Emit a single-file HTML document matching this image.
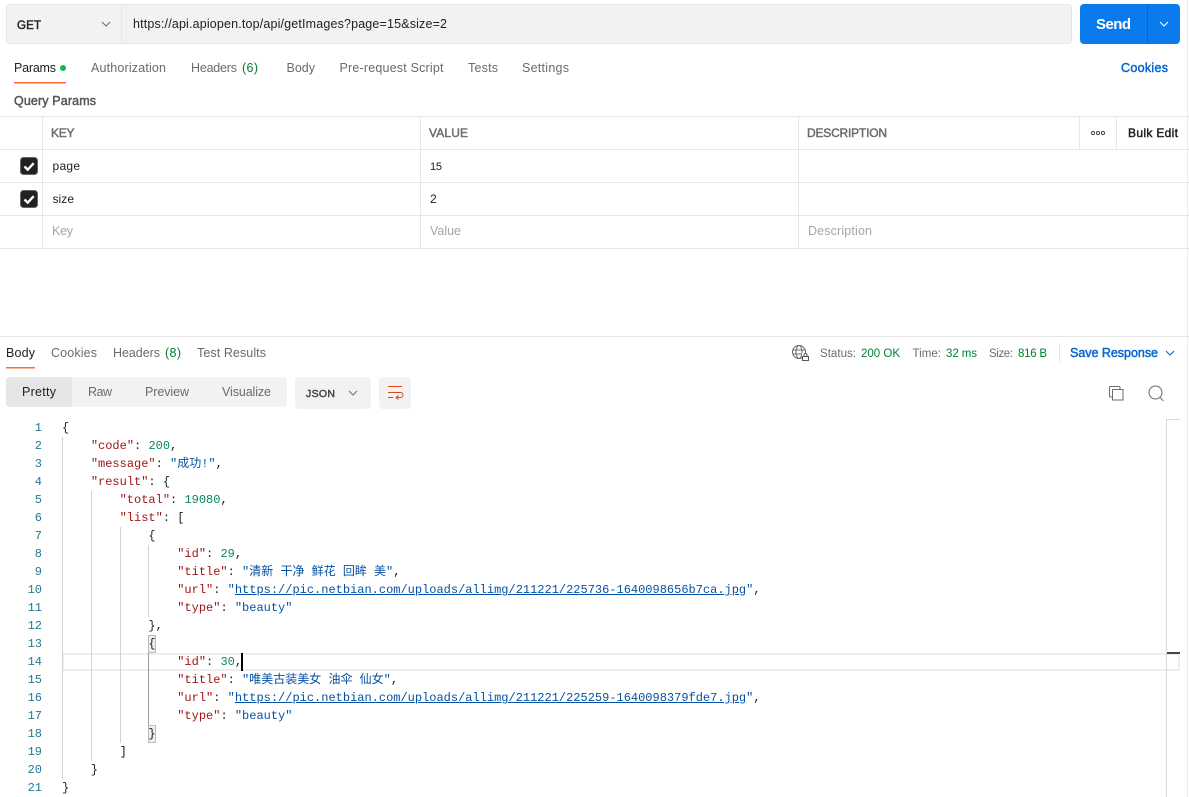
<!DOCTYPE html>
<html lang="en"><head><meta charset="utf-8"><title>Postman</title>
<style>
html,body{margin:0;padding:0;width:1189px;height:797px;overflow:hidden;background:#fff}
svg.ui{position:absolute;left:0;top:0}
svg text{font-family:"Liberation Sans",sans-serif;font-size:12.5px;fill:#6b6b6b}
svg text.d{fill:#212121}
svg text.b{stroke:#6b6b6b;stroke-width:.45px}
svg text.d.b{stroke:#212121}
svg text.g{fill:#007f31}
svg text.l{fill:#0265d2}
svg text.l.b{stroke:#0265d2}
svg text.p{fill:#a6a6a6}
.ln{position:absolute;left:0;width:42px;height:18px;line-height:18px;text-align:right;font:12px/18px "Liberation Mono",monospace;color:#237893}
.c{position:absolute;left:62px;height:18px;white-space:pre;font:12px/18px "Liberation Mono","Noto Sans CJK SC",monospace;color:#212121}
.k{color:#a31515}.n{color:#098658}.s{color:#0451a5}.u{color:#0451a5;text-decoration:underline}
.gd{position:absolute;width:1px;background:#d3d3d3}
</style></head><body>
<svg class="ui" width="1189" height="797" viewBox="0 0 1189 797" xmlns="http://www.w3.org/2000/svg">
<rect x="6.5" y="4.5" width="1065" height="39" rx="3.5" fill="#f2f2f2" stroke="#e6e6e6"/>
<rect x="121" y="5" width="1" height="38" fill="#e6e6e6"/>
<text class="d b" x="17" y="29" textLength="24" style="font-size:11.500px">GET</text>
<path d="M102 22l4 4 4-4" fill="none" stroke="#6b6b6b"/>
<text class="d" x="133" y="28" textLength="314" style="font-size:12.500px">https://api.apiopen.top/api/getImages?page=15&amp;size=2</text>
<rect x="1080" y="4" width="100" height="40" rx="4" fill="#097bed"/>
<rect x="1147" y="4" width="1" height="40" fill="#0265d2"/>
<text x="1096" y="29" textLength="35" style="font-size:15px;fill:#fff;font-weight:bold">Send</text>
<path d="M1160 22l4 4 4-4" fill="none" stroke="#fff"/>

<text class="d" x="14" y="72" textLength="42">Params</text>
<circle cx="63" cy="68" r="3" fill="#0cbb52"/>
<rect x="14" y="82" width="52" height="1.500" fill="#ff6c37"/>
<text x="91" y="72" textLength="75">Authorization</text>
<text x="191" y="72" textLength="46">Headers</text>
<text class="g" x="242" y="72" textLength="16">(6)</text>
<text x="286.500" y="72" textLength="28.500">Body</text>
<text x="339.500" y="72" textLength="104">Pre-request Script</text>
<text x="468" y="72" textLength="30">Tests</text>
<text x="522" y="72" textLength="47">Settings</text>
<text class="l b" x="1121" y="72" textLength="47" style="font-size:12.500px">Cookies</text>
<text class="b" x="14" y="105" textLength="82" style="font-size:12.500px;fill:#555;stroke:#555">Query Params</text>

<g fill="#e6e6e6">
<rect x="0" y="116" width="1189" height="1"/>
<rect x="0" y="149" width="1189" height="1"/>
<rect x="0" y="182" width="1189" height="1"/>
<rect x="0" y="215" width="1189" height="1"/>
<rect x="0" y="248" width="1189" height="1"/>
<rect x="42" y="116" width="1" height="132"/>
<rect x="420" y="116" width="1" height="132"/>
<rect x="798" y="116" width="1" height="132"/>
<rect x="1079" y="116" width="1" height="33"/>
<rect x="1116" y="116" width="1" height="33"/>
<rect x="0" y="336" width="1189" height="1"/>
</g>
<text class="b" x="51" y="137" textLength="23.500" style="font-size:12px">KEY</text>
<text class="b" x="429" y="137" textLength="39" style="font-size:12px">VALUE</text>
<text class="b" x="807" y="137" textLength="80" style="font-size:12px">DESCRIPTION</text>
<g fill="none" stroke="#444" stroke-width="1"><circle cx="1093" cy="133" r="1.600"/><circle cx="1098" cy="133" r="1.600"/><circle cx="1103" cy="133" r="1.600"/></g>
<text class="d b" x="1128" y="137" textLength="50" style="font-size:12px">Bulk Edit</text>

<rect x="20.500" y="157.500" width="17" height="17" rx="3" fill="#212121" stroke="#666"/>
<path d="M24.500 166.500l3.200 3.200 6-6.500" fill="none" stroke="#fff" stroke-width="2.400"/>
<rect x="20.500" y="190.500" width="17" height="17" rx="3" fill="#212121" stroke="#666"/>
<path d="M24.500 199.500l3.200 3.200 6-6.500" fill="none" stroke="#fff" stroke-width="2.400"/>
<text class="d" x="52.500" y="170" textLength="27.500" style="font-size:12px">page</text>
<text class="d" x="430" y="170" textLength="12" style="font-size:11px">15</text>
<text class="d" x="52.500" y="203" textLength="21.500" style="font-size:12px">size</text>
<text class="d" x="430" y="203" textLength="6.500" style="font-size:12px">2</text>
<text class="p" x="52" y="235" textLength="21">Key</text>
<text class="p" x="430" y="235" textLength="31">Value</text>
<text class="p" x="808" y="235" textLength="64">Description</text>

<text class="d" x="6" y="357" textLength="29">Body</text>
<rect x="6" y="367" width="29" height="1.500" fill="#ff6c37"/>
<text x="51" y="357" textLength="46">Cookies</text>
<text x="113" y="357" textLength="47">Headers</text>
<text class="g" x="165" y="357" textLength="16">(8)</text>
<text x="197" y="357" textLength="69">Test Results</text>

<g fill="none" stroke="#6b6b6b" stroke-width="1">
<circle cx="799" cy="352" r="6.500"/><ellipse cx="799" cy="352" rx="3" ry="6.500"/><path d="M793 350h12M793 354h9"/>
</g>
<rect x="802" y="353" width="7" height="8" fill="#fff"/>
<rect x="802.500" y="356.500" width="6" height="4" fill="#fff" stroke="#555"/>
<path d="M804 356.500v-1.500a1.500 1.500 0 0 1 3 0v1.500" fill="none" stroke="#555"/>
<text x="820" y="357" textLength="36" style="font-size:11.500px">Status:</text>
<text class="g" x="861" y="357" textLength="39" style="font-size:11.500px">200 OK</text>
<text x="912.500" y="357" textLength="28.500" style="font-size:11.500px">Time:</text>
<text class="g" x="946" y="357" textLength="31" style="font-size:11.500px">32 ms</text>
<text x="989" y="357" textLength="24" style="font-size:11.500px">Size:</text>
<text class="g" x="1018" y="357" textLength="29" style="font-size:11.500px">816 B</text>
<rect x="1059" y="343" width="1" height="19" fill="#e6e6e6"/>
<text class="l b" x="1070" y="357" textLength="88" style="font-size:12.500px">Save Response</text>
<path d="M1166 351l4 4 4-4" fill="none" stroke="#0265d2"/>

<rect x="6" y="377" width="281" height="30" rx="4" fill="#f2f2f2"/>
<path d="M10 377h62v30h-62a4 4 0 0 1-4-4v-22a4 4 0 0 1 4-4z" fill="#e6e6e6"/>
<text class="d" x="22" y="396" textLength="34">Pretty</text>
<text x="88" y="396" textLength="24">Raw</text>
<text x="145" y="396" textLength="44">Preview</text>
<text x="222" y="396" textLength="49">Visualize</text>
<rect x="295" y="377" width="76" height="32" rx="4" fill="#f2f2f2"/>
<text class="b" x="306" y="397" textLength="29" style="font-size:10.500px;fill:#444;stroke:#444">JSON</text>
<path d="M349 391l4 4 4-4" fill="none" stroke="#6b6b6b"/>
<rect x="379" y="377" width="32" height="32" rx="4" fill="#f2f2f2"/>
<path d="M388 386.500h14M388 392.500h12.500a2.500 2.500 0 0 1 0 5h-4M398.500 395.500l-2.500 2 2.500 2M388 397.500h5" fill="none" stroke="#dd4a15" stroke-width="1"/>

<g fill="none" stroke="#6b6b6b" stroke-width="1">
<rect x="1112.500" y="389.500" width="10.500" height="10.500"/>
<path d="M1112.500 397h-2a1 1 0 0 1-1-1v-8.500a1 1 0 0 1 1-1h8.500a1 1 0 0 1 1 1v2"/>
<circle cx="1155.500" cy="392.500" r="6.500"/><path d="M1160 397.500l3.500 3.500"/>
</g>

<rect x="63" y="653" width="1117" height="2" fill="#eee"/>
<rect x="63" y="669" width="1117" height="2" fill="#eee"/>
<rect x="1178" y="653" width="2" height="18" fill="#eee"/>
<rect x="63" y="653" width="1" height="18" fill="#eee"/>
<rect x="1166" y="419" width="1" height="378" fill="#d8d8d8"/>
<rect x="1167" y="419" width="13" height="1" fill="#ddd"/>
<rect x="1187" y="0" width="1" height="797" fill="#ececec"/>
<rect x="1167" y="652" width="13" height="2" fill="#444"/>
<rect x="148.500" y="635.500" width="7" height="17" fill="#efefef" stroke="#bbb"/>
<rect x="148.500" y="725.500" width="7" height="17" fill="#efefef" stroke="#bbb"/>
</svg>

<div class="gd" style="left:62px;top:437px;height:342px"></div>
<div class="gd" style="left:91px;top:491px;height:270px"></div>
<div class="gd" style="left:120px;top:527px;height:216px"></div>
<div class="gd" style="left:148px;top:545px;height:72px"></div>
<div class="gd" style="left:148px;top:653px;height:72px;background:#999"></div>
<div style="position:absolute;left:241px;top:653px;width:2px;height:18px;background:#000"></div>

<div class="ln" style="top:419px">1</div>
<div class="ln" style="top:437px">2</div>
<div class="ln" style="top:455px">3</div>
<div class="ln" style="top:473px">4</div>
<div class="ln" style="top:491px">5</div>
<div class="ln" style="top:509px">6</div>
<div class="ln" style="top:527px">7</div>
<div class="ln" style="top:545px">8</div>
<div class="ln" style="top:563px">9</div>
<div class="ln" style="top:581px">10</div>
<div class="ln" style="top:599px">11</div>
<div class="ln" style="top:617px">12</div>
<div class="ln" style="top:635px">13</div>
<div class="ln" style="top:653px">14</div>
<div class="ln" style="top:671px">15</div>
<div class="ln" style="top:689px">16</div>
<div class="ln" style="top:707px">17</div>
<div class="ln" style="top:725px">18</div>
<div class="ln" style="top:743px">19</div>
<div class="ln" style="top:761px">20</div>
<div class="ln" style="top:779px">21</div>

<div class="c" style="top:419px">{</div>
<div class="c" style="top:437px">    <span class="k">"code"</span>: <span class="n">200</span>,</div>
<div class="c" style="top:455px">    <span class="k">"message"</span>: <span class="s">"成功!"</span>,</div>
<div class="c" style="top:473px">    <span class="k">"result"</span>: {</div>
<div class="c" style="top:491px">        <span class="k">"total"</span>: <span class="n">19080</span>,</div>
<div class="c" style="top:509px">        <span class="k">"list"</span>: [</div>
<div class="c" style="top:527px">            {</div>
<div class="c" style="top:545px">                <span class="k">"id"</span>: <span class="n">29</span>,</div>
<div class="c" style="top:563px">                <span class="k">"title"</span>: <span class="s">"清新 干净 鲜花 回眸 美"</span>,</div>
<div class="c" style="top:581px">                <span class="k">"url"</span>: <span class="s">"</span><span class="u">https://pic.netbian.com/uploads/allimg/211221/225736-1640098656b7ca.jpg</span><span class="s">"</span>,</div>
<div class="c" style="top:599px">                <span class="k">"type"</span>: <span class="s">"beauty"</span></div>
<div class="c" style="top:617px">            },</div>
<div class="c" style="top:635px">            {</div>
<div class="c" style="top:653px">                <span class="k">"id"</span>: <span class="n">30</span>,</div>
<div class="c" style="top:671px">                <span class="k">"title"</span>: <span class="s">"唯美古装美女 油伞 仙女"</span>,</div>
<div class="c" style="top:689px">                <span class="k">"url"</span>: <span class="s">"</span><span class="u">https://pic.netbian.com/uploads/allimg/211221/225259-1640098379fde7.jpg</span><span class="s">"</span>,</div>
<div class="c" style="top:707px">                <span class="k">"type"</span>: <span class="s">"beauty"</span></div>
<div class="c" style="top:725px">            }</div>
<div class="c" style="top:743px">        ]</div>
<div class="c" style="top:761px">    }</div>
<div class="c" style="top:779px">}</div>
</body></html>
